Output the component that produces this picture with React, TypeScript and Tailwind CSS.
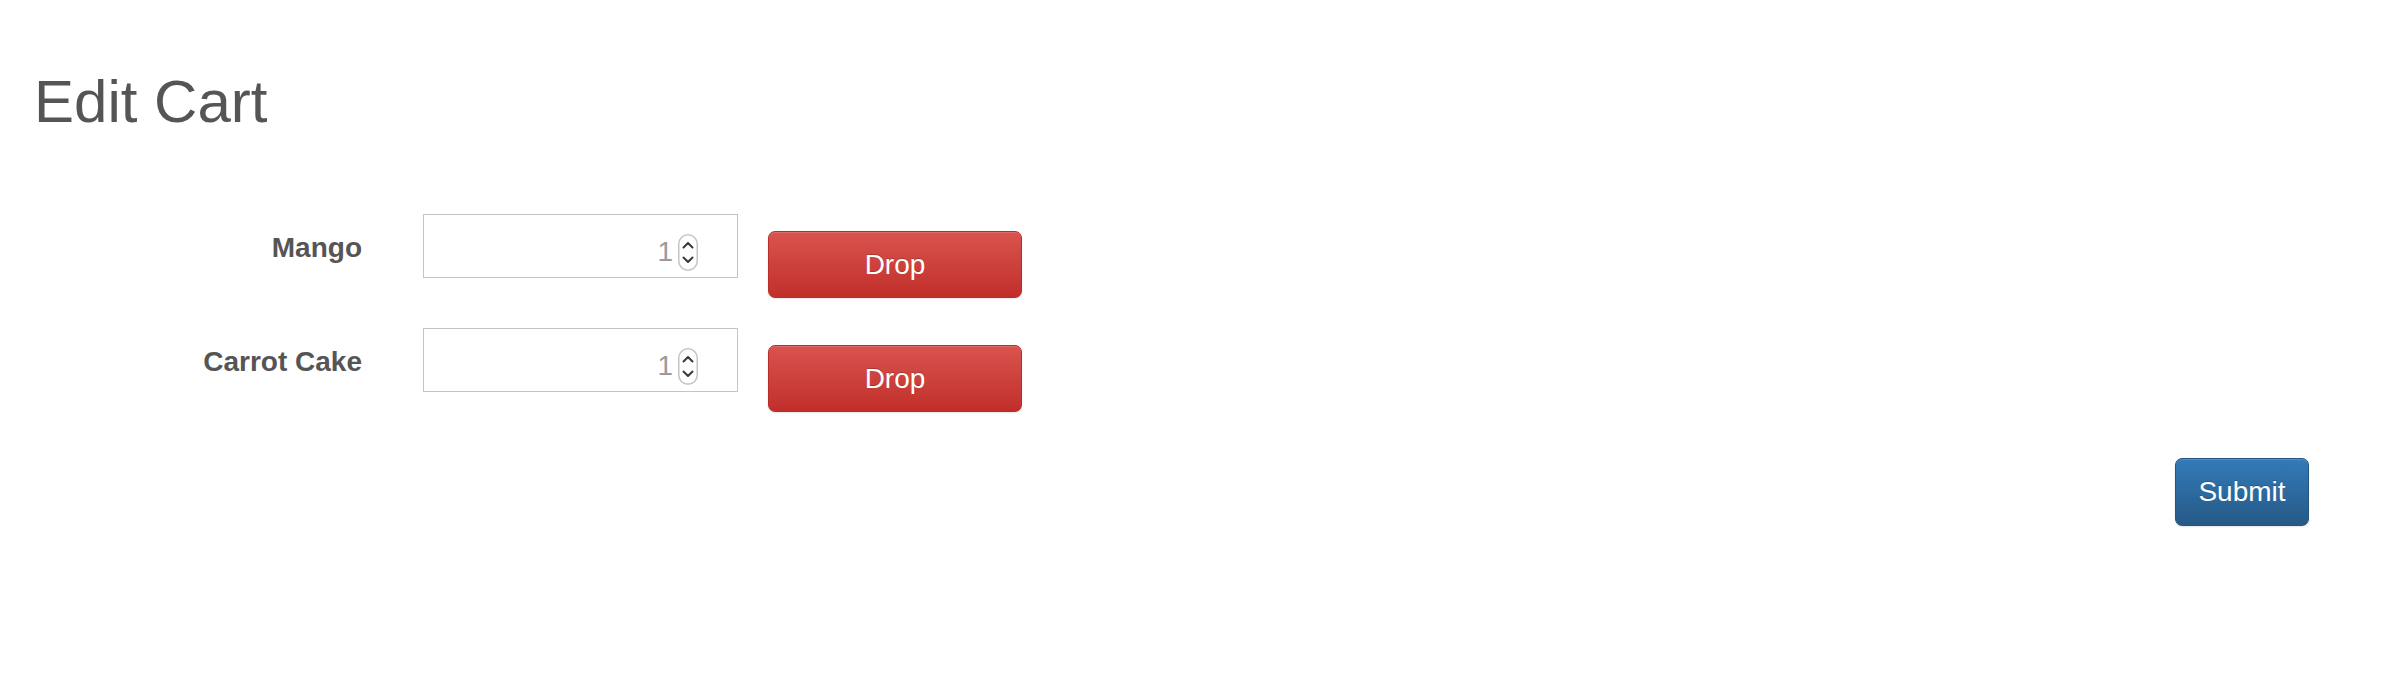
import React from "react";

function Spinner() {
  return (
    <svg width="20" height="37" viewBox="0 0 20 37" className="block">
      <rect x="0.75" y="0.75" width="18.5" height="35.5" rx="9.25" fill="#fff" stroke="#c4c4c4" strokeWidth="1.5" />
      <polyline points="5.5,13.5 10,9 14.5,13.5" fill="none" stroke="#3a3a3a" strokeWidth="2" strokeLinecap="round" strokeLinejoin="round" />
      <polyline points="5.5,23.5 10,28 14.5,23.5" fill="none" stroke="#3a3a3a" strokeWidth="2" strokeLinecap="round" strokeLinejoin="round" />
    </svg>
  );
}

function Row({ name }: { name: string }) {
  return (
    <div className="flex items-start">
      <div className="w-[392px] pr-[30px] pt-[14px] text-right text-[28px] font-bold leading-[40px] text-[#555]">
        {name}
      </div>
      <div className="pl-[31px]">
        <div className="flex h-[64px] w-[315px] items-center justify-end gap-[5px] border border-[#c4c4c4] bg-white pr-[39px] pt-[12px]">
          <span className="text-[28px] leading-[28px] text-[#9a9a9a]">1</span>
          <Spinner />
        </div>
      </div>
      <button
        type="button"
        className="ml-[30px] mt-[17px] h-[67px] w-[254px] rounded-[7px] border border-[#b92c28] bg-gradient-to-b from-[#d9534f] to-[#c12e2a] text-[28px] leading-none text-white shadow-[inset_0_1px_0_rgba(255,255,255,0.15),0_1px_2px_rgba(0,0,0,0.1)] [text-shadow:0_-1px_0_rgba(0,0,0,0.2)]"
      >
        Drop
      </button>
    </div>
  );
}

export default function App() {
  return (
    <div className="h-[700px] w-full bg-white font-[family-name:Liberation_Sans,Arial,sans-serif]">
      <h2 className="pl-[34px] pt-[69px] text-[60px] font-normal leading-[66px] text-[#555]">Edit Cart</h2>
      <form className="mt-[79px] flex flex-col gap-[30px]" onSubmit={(e) => e.preventDefault()}>
        <Row name="Mango" />
        <Row name="Carrot Cake" />
        <div className="mt-[16px] flex justify-end pr-[75px]">
          <button
            type="submit"
            className="h-[68px] w-[134px] rounded-[7px] border border-[#245580] bg-gradient-to-b from-[#337ab7] to-[#265a88] text-[28px] leading-none text-white shadow-[inset_0_1px_0_rgba(255,255,255,0.15),0_1px_2px_rgba(0,0,0,0.1)] [text-shadow:0_-1px_0_rgba(0,0,0,0.2)]"
          >
            Submit
          </button>
        </div>
      </form>
    </div>
  );
}
